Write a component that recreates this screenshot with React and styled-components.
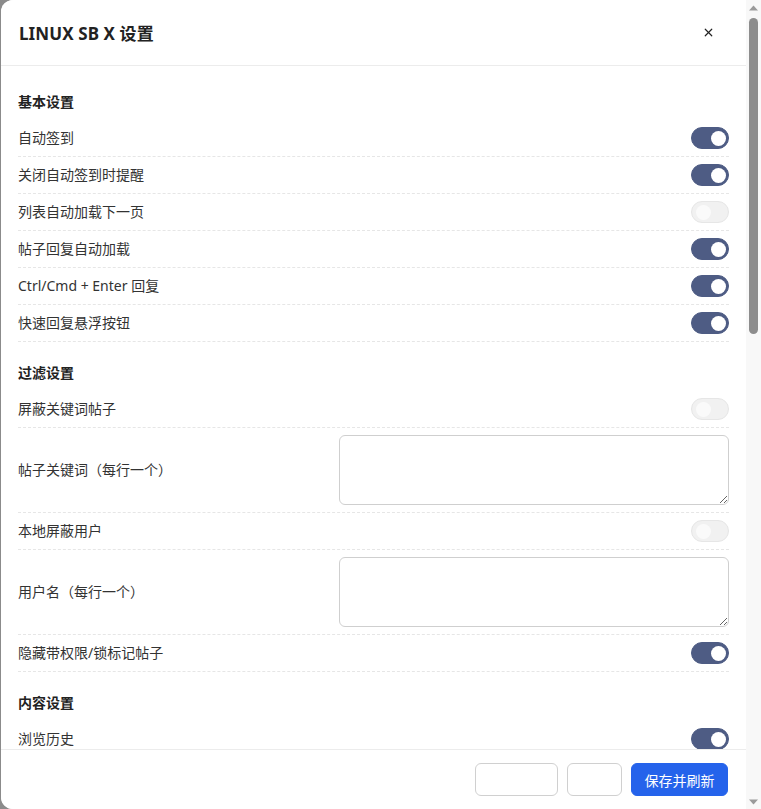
import React, { useState } from 'react';
import styled, { createGlobalStyle } from 'styled-components';
import { X } from 'lucide-react';

const GlobalStyle = createGlobalStyle`
    html, body {
        margin: 0;
        padding: 0;
        height: 100%;
        background: #8b8b8b;
        overflow: hidden;
    }
    * {
        box-sizing: border-box;
    }
    body {
        font-family: "Noto Sans", "Noto Sans CJK SC", sans-serif;
        color: #333;
    }
`;

const Modal = styled.div`
    margin-left: 1px;
    width: calc(100vw - 1px);
    height: 100vh;
    background: #fff;
    border-radius: 12px 0 0 12px;
    overflow: hidden;
    display: flex;
`;

const Panel = styled.div`
    flex: 1;
    min-width: 0;
    overflow-y: auto;
    scrollbar-width: none;
    display: flex;
    flex-direction: column;
`;

/* scroll rail on the right edge of the dialog */
const Rail = styled.div`
    width: 15px;
    flex-shrink: 0;
    display: flex;
    flex-direction: column;
    background: #f8f8f8;
`;

const RailArrow = styled.div`
    height: 15px;
    display: flex;
    align-items: center;
    justify-content: center;
    color: #9a9a9a;
`;

const RailTrack = styled.div`
    flex: 1;
    padding: 3px 3px 0 3px;
`;

const Thumb = styled.div`
    height: ${(p) => p.$size}px;
    border-radius: 5px;
    background: #8d8d8d;
`;

const Header = styled.div`
    position: sticky;
    top: 0;
    z-index: 2;
    flex-shrink: 0;
    height: 66px;
    display: flex;
    align-items: center;
    justify-content: space-between;
    padding: 0 31px 0 18px;
    background: #fff;
    border-bottom: 1px solid #ececec;
`;

const Title = styled.h2`
    margin: 0 0 1px;
    font-size: 17px;
    font-weight: 700;
    color: #222;
    letter-spacing: 0.1px;
`;

const CloseButton = styled.button`
    border: none;
    background: none;
    padding: 0;
    display: flex;
    color: #222;
    cursor: pointer;
`;

const Body = styled.div`
    flex: 1;
    padding: 26px 17px 40px 17px;
`;

const Section = styled.section`
    & + & {
        margin-top: 21px;
    }
`;

const SectionTitle = styled.h3`
    margin: 0 0 8px;
    font-size: 14px;
    line-height: 20px;
    font-weight: 700;
    color: #222;
`;

const Row = styled.div`
    display: flex;
    align-items: center;
    justify-content: space-between;
    min-height: 37px;
    padding: 7px 0;
    border-bottom: 1px dashed #e6e6e6;
`;

const Label = styled.span`
    font-size: 14px;
    line-height: 20px;
    color: #333;
`;

const Track = styled.button`
    position: relative;
    width: 38px;
    height: 22px;
    padding: 0;
    border-radius: 11px;
    cursor: pointer;
    border: 1px solid ${(p) => (p.$on ? '#4e5c84' : '#e6e6e6')};
    background: ${(p) => (p.$on ? '#4e5c84' : '#f1f1f1')};

    &::after {
        content: '';
        position: absolute;
        top: 2.5px;
        left: ${(p) => (p.$on ? '18.5px' : '3.5px')};
        width: 15px;
        height: 15px;
        border-radius: 50%;
        background: ${(p) => (p.$on ? '#fff' : '#fafafa')};
    }
`;

const TextArea = styled.textarea`
    width: 390px;
    height: 70px;
    border: 1px solid #cfcfcf;
    border-radius: 6px;
    padding: 6px 8px;
    font: inherit;
    font-size: 13px;
    outline: none;
    resize: vertical;
`;

const Footer = styled.div`
    position: sticky;
    bottom: 0;
    z-index: 2;
    flex-shrink: 0;
    height: 60px;
    display: flex;
    justify-content: flex-end;
    align-items: center;
    gap: 9px;
    padding: 0 18px 0 0;
    background: #fff;
    border-top: 1px solid #ececec;
`;

const Button = styled.button`
    height: 33px;
    width: ${(p) => p.$w}px;
    border-radius: 6px;
    font-family: inherit;
    font-size: 14px;
    cursor: pointer;
    border: 1px solid ${(p) => (p.$primary ? '#2563eb' : '#d0d0d0')};
    background: ${(p) => (p.$primary ? '#2563eb' : '#fff')};
    color: ${(p) => (p.$primary ? '#fff' : '#333')};
`;

const settings = [
    {
        title: '基本设置',
        items: [
            { label: '自动签到', on: true },
            { label: '关闭自动签到时提醒', on: true },
            { label: '列表自动加载下一页', on: false },
            { label: '帖子回复自动加载', on: true },
            { label: 'Ctrl/Cmd + Enter 回复', on: true },
            { label: '快速回复悬浮按钮', on: true },
        ],
    },
    {
        title: '过滤设置',
        items: [
            { label: '屏蔽关键词帖子', on: false },
            { label: '帖子关键词（每行一个）', text: true },
            { label: '本地屏蔽用户', on: false },
            { label: '用户名（每行一个）', text: true },
            { label: '隐藏带权限/锁标记帖子', on: true },
        ],
    },
    {
        title: '内容设置',
        items: [
            { label: '浏览历史', on: true },
            { label: '显示楼层号', on: true },
            { label: '图片点击放大', on: true },
            { label: '代码块一键复制', on: true },
            { label: '折叠长签名', on: false },
            { label: '新标签页打开帖子', on: false },
            { label: '显示用户等级', on: true },
            { label: '隐藏已读帖子', on: false },
        ],
    },
    {
        title: '外观设置',
        items: [
            { label: '深色模式跟随系统', on: true },
            { label: '宽屏布局', on: false },
            { label: '紧凑列表', on: false },
            { label: '隐藏侧边栏', on: false },
            { label: '自定义样式（CSS）', text: true },
            { label: '显示阅读进度条', on: true },
            { label: '返回顶部按钮', on: true },
        ],
    },
    {
        title: '通知设置',
        items: [
            { label: '新回复提醒', on: true },
            { label: '被提及时提醒', on: true },
            { label: '桌面通知', on: false },
            { label: '提示音', on: false },
            { label: '私信提醒', on: true },
        ],
    },
    {
        title: '其他设置',
        items: [
            { label: '键盘快捷键', on: true },
            { label: '记住滚动位置', on: true },
            { label: '自动展开全文', on: false },
            { label: '链接预览', on: false },
            { label: '统计阅读时长', on: true },
            { label: '调试日志', on: false },
            { label: '启动时检查更新', on: true },
        ],
    },
];

const Toggle = ({ initial }) => {
    const [on, setOn] = useState(initial);
    return <Track type="button" $on={on} onClick={() => setOn(!on)} />;
};

const Arrow = ({ down }) => (
    <svg width="9" height="6" viewBox="0 0 9 6">
        <path d={down ? 'M0 0.5 H9 L4.5 5.5 Z' : 'M0 5.5 H9 L4.5 0.5 Z'} fill="currentColor" />
    </svg>
);

const App = () => {
    return (
        <>
            <GlobalStyle />
            <Modal>
                <Panel>
                    <Header>
                        <Title>LINUX SB X 设置</Title>
                        <CloseButton type="button" aria-label="关闭">
                            <X size={13} strokeWidth={2.2} />
                        </CloseButton>
                    </Header>
                    <Body>
                        {settings.map((group) => (
                            <Section key={group.title}>
                                <SectionTitle>{group.title}</SectionTitle>
                                {group.items.map((item) => (
                                    <Row key={item.label}>
                                        <Label>{item.label}</Label>
                                        {item.text ? <TextArea /> : <Toggle initial={item.on} />}
                                    </Row>
                                ))}
                            </Section>
                        ))}
                    </Body>
                    <Footer>
                        <Button type="button" $w={83} />
                        <Button type="button" $w={55} />
                        <Button type="button" $primary $w={97}>保存并刷新</Button>
                    </Footer>
                </Panel>
                <Rail>
                    <RailArrow><Arrow /></RailArrow>
                    <RailTrack>
                        <Thumb $size={316} />
                    </RailTrack>
                    <RailArrow><Arrow down /></RailArrow>
                </Rail>
            </Modal>
        </>
    );
};

export default App;
